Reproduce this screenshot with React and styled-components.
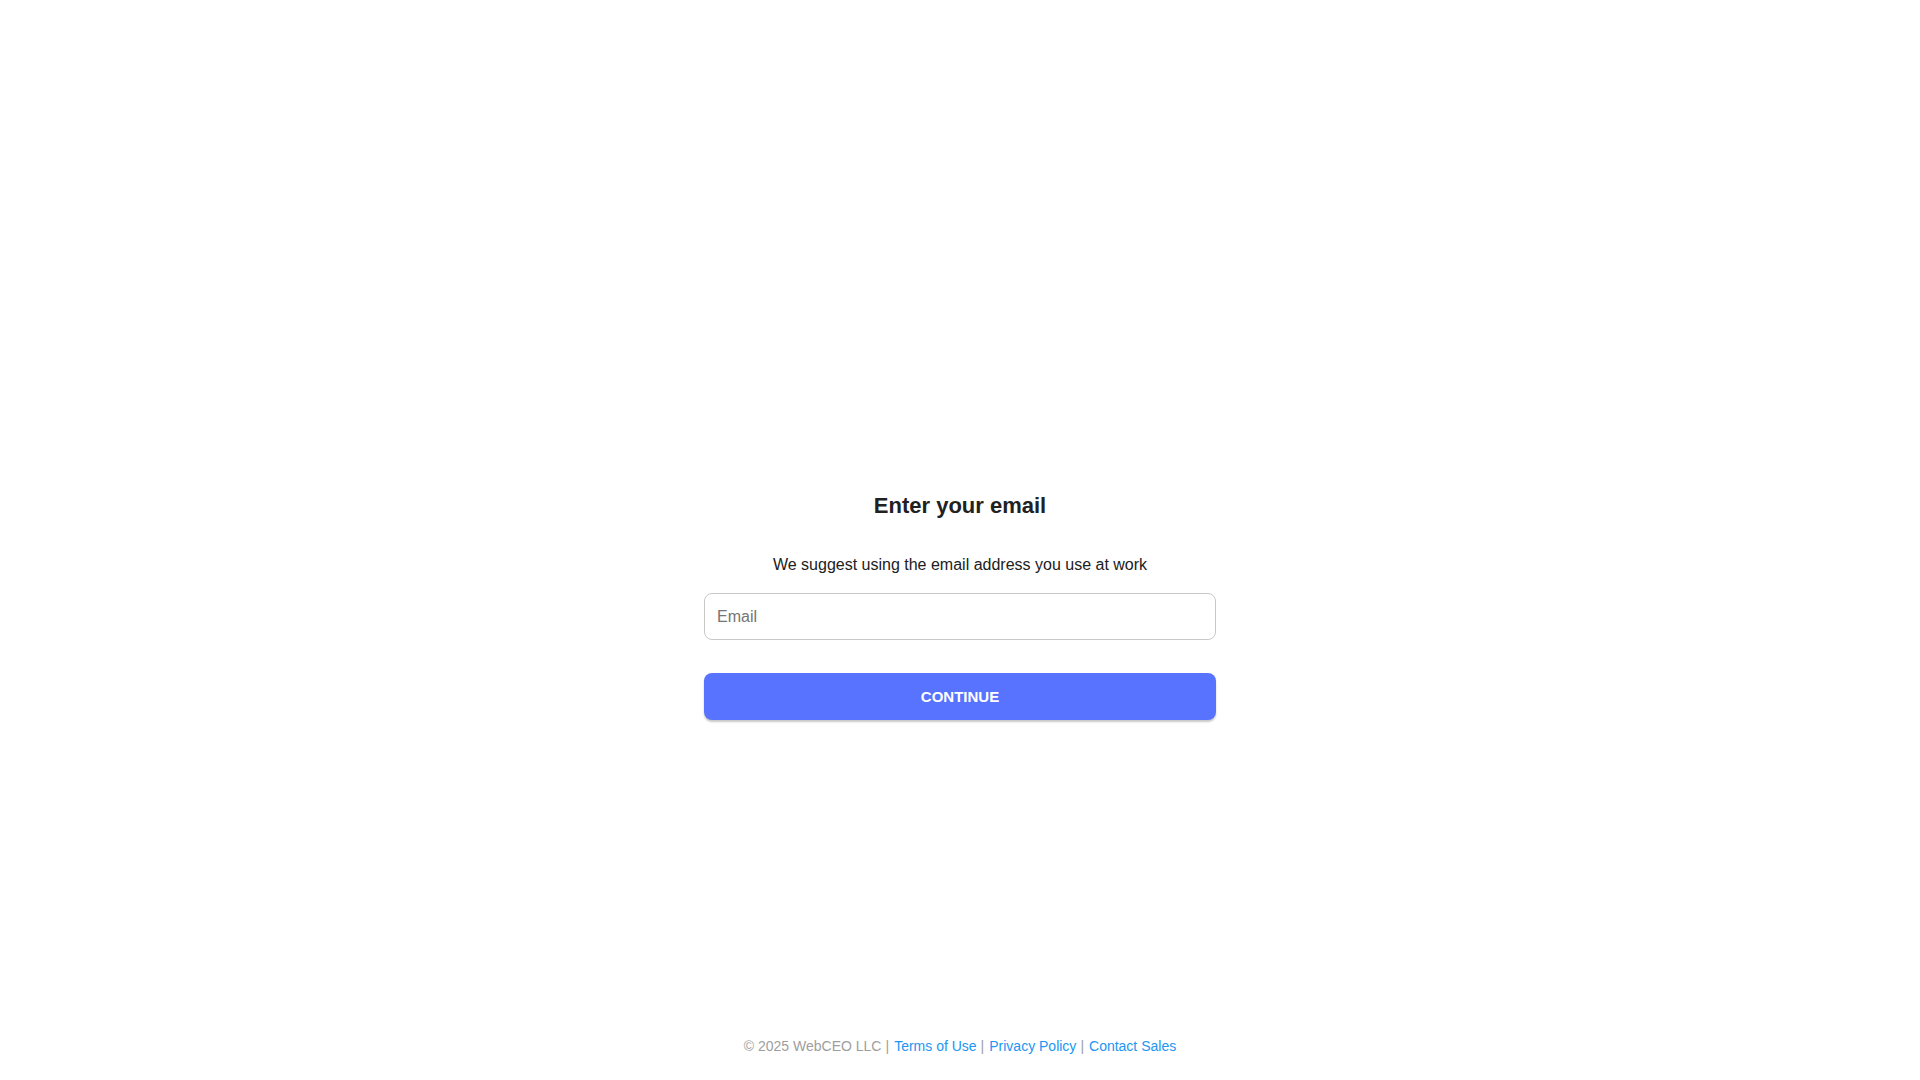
import styled, { createGlobalStyle } from 'styled-components';

const GlobalStyle = createGlobalStyle`
  html, body {
    margin: 0;
    padding: 0;
    background: #ffffff;
  }

  body {
    font-family: "Liberation Sans", Arial, sans-serif;
    color: #212121;
  }

  * {
    box-sizing: border-box;
  }
`;

const Page = styled.div`
  min-height: 100vh;
  display: flex;
  flex-direction: column;
  align-items: center;
`;

const Main = styled.main`
  width: 100%;
  padding-top: 493px;
  display: flex;
  justify-content: center;
`;

const Form = styled.form`
  width: 512px;
  display: flex;
  flex-direction: column;
  align-items: stretch;
`;

const Title = styled.h1`
  margin: 0;
  font-size: 22px;
  font-weight: 700;
  line-height: 25px;
  text-align: center;
  color: #212121;
`;

const Hint = styled.p`
  margin: 38px 0 0;
  font-size: 16px;
  line-height: 18px;
  text-align: center;
  color: #212121;
`;

const EmailInput = styled.input`
  margin-top: 19px;
  height: 47px;
  width: 100%;
  padding: 0 12px;
  border: 1px solid #c8c8c8;
  border-radius: 8px;
  font-family: inherit;
  font-size: 16px;
  color: #212121;
  outline: none;

  &::placeholder {
    color: #757575;
  }
`;

const Button = styled.button`
  margin-top: 33px;
  height: 47px;
  width: 100%;
  border: none;
  border-radius: 8px;
  background-color: #5773ff;
  box-shadow: 0 2px 2px rgba(0, 0, 0, 0.22);
  color: #ffffff;
  font-family: inherit;
  font-size: 15px;
  font-weight: 700;
  text-transform: uppercase;
  cursor: pointer;
`;

const Footer = styled.footer`
  margin-top: auto;
  padding-bottom: 26px;
  font-size: 14px;
  line-height: 16px;
  color: #9e9e9e;
  text-align: center;
`;

const Separator = styled.span`
  margin: 0 5px 0 4px;
`;

const FooterLink = styled.a`
  color: #2196f3;
  text-decoration: none;
`;

const links = ['Terms of Use', 'Privacy Policy', 'Contact Sales'];

const App = () => {
  return (
    <>
      <GlobalStyle />
      <Page>
        <Main>
          <Form onSubmit={e => e.preventDefault()}>
            <Title>Enter your email</Title>
            <Hint>We suggest using the email address you use at work</Hint>
            <EmailInput type="email" placeholder="Email" />
            <Button type="submit">Continue</Button>
          </Form>
        </Main>
        <Footer>
          © 2025 WebCEO LLC
          {links.map(label => (
            <span key={label}>
              <Separator>|</Separator>
              <FooterLink href="#">{label}</FooterLink>
            </span>
          ))}
        </Footer>
      </Page>
    </>
  );
};

export default App;
